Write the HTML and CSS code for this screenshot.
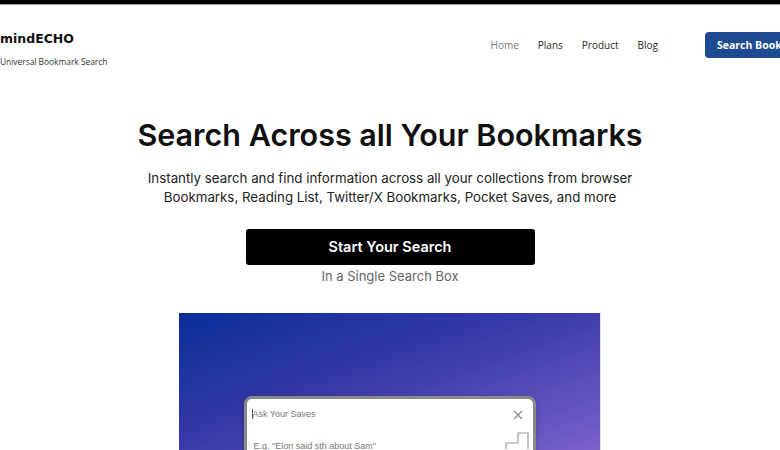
FILE: index.html
```html
<!DOCTYPE html>
<html lang="en">
<head>
    <meta charset="UTF-8">
    <meta name="viewport" content="width=device-width, initial-scale=1.0">
    <title>mindECHO - Universal Bookmark Search</title>
    <link rel="stylesheet" href="styles.css">
</head>
<body>
    <div class="top-bar"></div>

    <header class="site-header">
        <div class="brand">
            <div class="brand-name">mindECHO</div>
            <div class="brand-tag">Universal Bookmark Search</div>
        </div>
        <nav class="nav">
            <a href="#" class="nav-link active">Home</a>
            <a href="#" class="nav-link">Plans</a>
            <a href="#" class="nav-link">Product</a>
            <a href="#" class="nav-link">Blog</a>
        </nav>
        <a href="#" class="nav-button">Search Bookmarks</a>
    </header>

    <section class="hero">
        <h1>Search Across all Your Bookmarks</h1>
        <p class="lead">Instantly search and find information across all your collections from browser<br>
            Bookmarks, Reading List, Twitter/X Bookmarks, Pocket Saves, and more</p>
        <a href="#" class="cta">Start Your Search</a>
        <div class="cta-note">In a Single Search Box</div>

        <div class="preview">
            <div class="search-window">
                <div class="search-row">
                    <span class="caret"></span>
                    <span class="placeholder">Ask Your Saves</span>
                    <svg class="close" width="10" height="10" viewBox="0 0 10 10">
                        <path d="M1 1 L9 9 M9 1 L1 9" stroke="#888" stroke-width="1.2" fill="none"/>
                    </svg>
                </div>
                <div class="search-row hint-row">
                    <span class="hint">E.g. "Elon said sth about Sam"</span>
                    <svg class="send" width="24" height="18" viewBox="0 0 24 18">
                        <path d="M1 17 V11 H13 V1 H23 V17" stroke="#999" stroke-width="1.2" fill="none"/>
                    </svg>
                </div>
            </div>
        </div>
    </section>
</body>
</html>
```

FILE: styles.css
```css
html, body {
    margin: 0;
    padding: 0;
}
body {
    background: #fff;
    color: #111;
    font-family: 'Inter', 'Liberation Sans', sans-serif;
    overflow-x: hidden;
}
.top-bar {
    height: 4px;
    background: #000;
    border-bottom: 1px solid #999;
}
.site-header {
    width: 849px;
    display: flex;
    align-items: flex-start;
    padding-top: 25px;
    height: 60px;
    box-sizing: content-box;
}
.brand-name {
    font-family: 'DejaVu Sans', sans-serif;
    font-weight: bold;
    font-size: 12.5px;
    line-height: 16px;
    margin-top: 1px;
}
.brand-tag {
    font-family: 'Open Sans', sans-serif;
    font-size: 8.4px;
    color: #333;
    margin-top: 9px;
}
.nav {
    display: flex;
    gap: 19px;
    margin-left: auto;
    margin-top: 8px;
}
.nav-link {
    font-family: 'Open Sans', sans-serif;
    font-size: 10px;
    color: #2a2a2a;
    text-decoration: none;
}
.nav-link.active {
    color: #777;
}
.nav-button {
    margin-left: 47px;
    margin-top: 2px;
    background: #1d4a91;
    color: #fff;
    font-family: 'Open Sans', sans-serif;
    font-weight: bold;
    font-size: 10.5px;
    text-decoration: none;
    padding: 6px 12px;
    border-radius: 4px;
    white-space: nowrap;
    width: 120px;
}
.hero {
    display: flex;
    flex-direction: column;
    align-items: center;
    text-align: center;
}
.hero h1 {
    margin: 25px 0 0;
    font-size: 30.5px;
    font-weight: 600;
    letter-spacing: 0;
    line-height: 40px;
}
.lead {
    margin: 14px 0 0;
    font-size: 13.3px;
    line-height: 18.5px;
    color: #222;
}
.cta {
    margin-top: 23px;
    width: 289px;
    height: 36px;
    line-height: 36px;
    background: #000;
    color: #fff;
    font-weight: 600;
    font-size: 14.5px;
    text-decoration: none;
    border-radius: 3px;
}
.cta-note {
    margin-top: 3px;
    font-size: 13px;
    color: #666;
}
.preview {
    margin-top: 29px;
    width: 422px;
    height: 200px;
    background: linear-gradient(160deg, #082f96 0%, #3538a6 35%, #6656c2 70%, #a372da 100%);
    border-right: 1px solid #e6dcff;
    display: flex;
    justify-content: center;
    padding-top: 83px;
    box-sizing: border-box;
}
.search-window {
    width: 286px;
    height: 120px;
    background: #fff;
    border: 3px solid #8a8a8a;
    border-radius: 8px;
    box-shadow: 0 2px 6px rgba(0, 0, 0, 0.2);
    font-family: 'Liberation Sans', sans-serif;
    font-size: 9px;
    color: #777;
    text-align: left;
}
.search-row {
    display: flex;
    align-items: center;
    padding: 9px 10px 0 5px;
}
.caret {
    width: 1px;
    height: 10px;
    background: #555;
}
.placeholder {
    flex: 1;
}
.close {
    margin-top: 2px;
}
.hint-row {
    padding-top: 21px;
    padding-right: 4px;
}
.hint {
    flex: 1;
    padding-left: 2px;
}
.send {
    margin-top: -10px;
}
```
